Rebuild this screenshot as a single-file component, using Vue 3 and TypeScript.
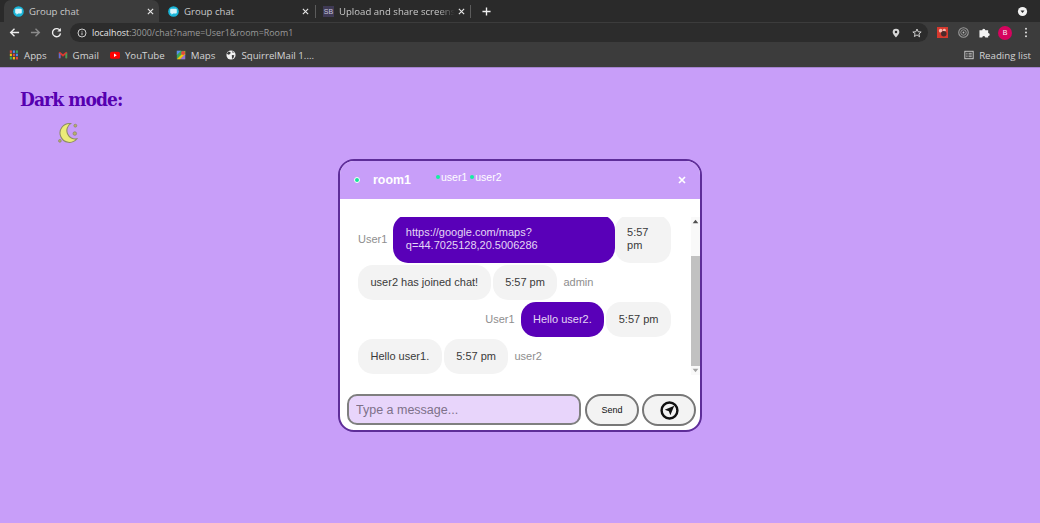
<template>
  <div class="browser">
    <!-- Tab strip -->
    <div class="tab-strip">
      <div
        v-for="tab in tabs"
        :key="tab.id"
        class="tab"
        :class="{ active: tab.active, divided: tab.divided }"
      >
        <span v-if="tab.sb" class="sb-icon">SB</span>
        <svg v-else class="fav" viewBox="0 0 12 12">
          <circle cx="6" cy="6" r="5.8" fill="#19b5d8" />
          <path d="M3.4 3h5.2a1 1 0 0 1 1 1v3.200a1 1 0 0 1-1 1H5.600L3.800 9.600V8.200h-.4a1 1 0 0 1-1-1V4a1 1 0 0 1 1-1z" fill="#d8f4fb" />
        </svg>
        <span class="tab-title" :class="{ fade: tab.sb }">{{ tab.title }}</span>
        <svg class="tab-close" viewBox="0 0 8 8">
          <path d="M1 1l6 6M7 1L1 7" stroke="#e8e8e8" stroke-width="1.3" />
        </svg>
      </div>
      <svg class="new-tab" viewBox="0 0 10 10">
        <path d="M5 .5v9M.5 5h9" stroke="#f0f0f0" stroke-width="1.5" />
      </svg>
      <svg class="tab-search" viewBox="0 0 12 12">
        <circle cx="6" cy="6" r="5" fill="#f2f2f2" />
        <path d="M3.8 5h4.4L6 7.600z" fill="#2a2a2a" />
      </svg>
    </div>

    <!-- Toolbar -->
    <div class="toolbar">
      <svg class="tool-icon" viewBox="0 0 12 12">
        <path d="M11 6H2M6 1.800L1.800 6 6 10.200" fill="none" stroke="#eee" stroke-width="1.5" />
      </svg>
      <svg class="tool-icon" viewBox="0 0 12 12">
        <path d="M1 6h9M6 1.800L10.200 6 6 10.200" fill="none" stroke="#8b8b8b" stroke-width="1.5" />
      </svg>
      <svg class="tool-icon" viewBox="0 0 12 12">
        <path d="M10 4.200A4.400 4.400 0 1 0 10.400 7" fill="none" stroke="#eee" stroke-width="1.5" />
        <path d="M10.800 1v4h-4z" fill="#eee" />
      </svg>
      <div class="omnibox">
        <svg class="info" viewBox="0 0 12 12">
          <circle cx="6" cy="6" r="4.800" fill="none" stroke="#ddd" stroke-width="1.1" />
          <path d="M6 5.400v3.200M6 3.400v1" stroke="#ddd" stroke-width="1.1" />
        </svg>
        <span class="url"><b>localhost</b>:3000/chat?name=User1&amp;room=Room1</span>
        <svg class="omni-icon" viewBox="0 0 12 12">
          <path d="M6 .8a4 4 0 0 0-4 4c0 2.800 4 6.600 4 6.600s4-3.800 4-6.600a4 4 0 0 0-4-4z" fill="#d6d6d6" />
          <circle cx="6" cy="4.800" r="1.500" fill="#2c2c2c" />
        </svg>
        <svg class="omni-icon" viewBox="0 0 12 12">
          <path d="M6 1.200l1.400 3.300 3.600.3-2.700 2.300.8 3.500L6 8.300l-3.100 1.900.8-3.500L1 4.800l3.600-.3z" fill="none" stroke="#dcdcdc" stroke-width="1.1" />
        </svg>
      </div>
      <div class="extensions">
        <svg class="ext" viewBox="0 0 12 12">
          <rect width="12" height="12" fill="#d6392e" />
          <circle cx="4" cy="4" r="2" fill="#f3b9b0" />
          <circle cx="8" cy="3.600" r="1.600" fill="#f3b9b0" />
          <circle cx="7.400" cy="7.400" r="3" fill="#4a2b2b" />
        </svg>
        <svg class="ext" viewBox="0 0 12 12">
          <circle cx="6" cy="6" r="5.200" fill="none" stroke="#9a9a9a" stroke-width="1.2" />
          <circle cx="6" cy="6" r="3" fill="none" stroke="#9a9a9a" stroke-width="1" />
          <circle cx="6" cy="6" r="1" fill="#bbb" />
        </svg>
        <svg class="ext" viewBox="0 0 12 12">
          <path d="M.5 3.500h3a1.700 1.700 0 1 1 3.400 0H10v3a1.700 1.700 0 1 1 0 3.400V11.500H6.900a1.700 1.700 0 1 0-3.400 0H.5z" fill="#f4f4f4" />
        </svg>
        <span class="avatar">B</span>
        <svg class="dots" viewBox="0 0 4 12">
          <circle cx="2" cy="2" r="1.1" fill="#ddd" />
          <circle cx="2" cy="6" r="1.1" fill="#ddd" />
          <circle cx="2" cy="10" r="1.1" fill="#ddd" />
        </svg>
      </div>
    </div>

    <!-- Bookmarks -->
    <div class="bookmarks">
      <div class="bookmark">
        <svg class="mark" viewBox="0 0 12 12">
          <g v-for="(col, c) in appColors" :key="c">
            <rect v-for="r in 3" :key="r" :x="1 + c * 3.6" :y="0.5 + (r - 1) * 3.9" width="2.5" height="3" :fill="col[r - 1]" />
          </g>
        </svg>
        Apps
      </div>
      <div class="bookmark">
        <svg class="mark" viewBox="0 0 12 12">
          <path d="M1 3v7h2V5.500L6 8l3-2.500V10h2V3L9.800 2 6 5 2.200 2z" fill="#d93a2f" />
          <path d="M1 3v7h2V5.500z" fill="#5b6fd6" />
          <path d="M11 3v7H9V5.500z" fill="#3aa55b" />
        </svg>
        Gmail
      </div>
      <div class="bookmark">
        <svg class="mark" viewBox="0 0 12 12">
          <rect y="2" width="12" height="8.500" rx="2.200" fill="#f00" />
          <path d="M4.800 4.300v4l3.400-2z" fill="#fff" />
        </svg>
        YouTube
      </div>
      <div class="bookmark">
        <svg class="mark" viewBox="0 0 12 12">
          <rect x="1" y="1" width="10" height="10" fill="#3aa55b" />
          <path d="M1 11l10-10v4L5 11z" fill="#f4c20d" />
          <path d="M1 1h5L1 6z" fill="#5b8def" />
          <circle cx="8.500" cy="3.500" r="2.400" fill="#e2483d" />
          <path d="M5 11l6-6v6z" fill="#9a6fd0" />
        </svg>
        Maps
      </div>
      <div class="bookmark">
        <svg class="mark" viewBox="0 0 12 12">
          <circle cx="6" cy="6" r="5.500" fill="#f2f2f2" />
          <path d="M3 1.800l2.600 1-.6 2-2 .8-2-1zM7 6l3 .4-1.200 3.400-1.600.8zM7.500 1l2 2-1.500.6z" fill="#3c3c3c" />
        </svg>
        SquirrelMail 1....
      </div>
      <div class="reading">
        <svg class="mark" viewBox="0 0 12 12">
          <rect x="1" y="1.500" width="10" height="9" fill="none" stroke="#ddd" stroke-width="1" />
          <path d="M2.800 4h1.400M2.800 6h1.400M2.800 8h1.400M5.500 4h3.800M5.500 6h3.800M5.500 8h3.800" stroke="#ddd" stroke-width=".9" />
        </svg>
        Reading list
      </div>
    </div>

    <!-- Page -->
    <main class="page">
      <div class="dark-toggle">
        <h2 class="dark-title">Dark mode:</h2>
        <svg class="moon" viewBox="0 0 20 20">
          <path d="M12 1.500A9 9 0 1 0 18 16 8 8 0 0 1 12 1.500z" fill="#ecec78" stroke="#8d8d63" stroke-width="1" />
          <circle cx="16.500" cy="3.500" r="1.400" fill="#b7b06e" stroke="#85805c" stroke-width=".6" />
          <circle cx="16" cy="11" r="1.700" fill="#b7b06e" stroke="#85805c" stroke-width=".6" />
          <circle cx="1.800" cy="18" r="1.300" fill="#b7b06e" stroke="#85805c" stroke-width=".6" />
        </svg>
      </div>

      <section class="chat">
        <header class="chat-head">
          <span class="status-dot"></span>
          <span class="room">room1</span>
          <div class="online">
            <span v-for="user in onlineUsers" :key="user" class="online-user">{{ user }}</span>
          </div>
          <svg class="close" viewBox="0 0 8 8">
            <path d="M1 1l6 6M7 1L1 7" stroke="#fff" stroke-width="1.700" />
          </svg>
        </header>

        <div class="chat-body">
          <div class="messages">
            <div
              v-for="msg in messages"
              :key="msg.id"
              class="row"
              :class="{ mine: msg.mine, long: msg.long }"
            >
              <span v-if="msg.mine" class="sender">{{ msg.sender }}</span>
              <span class="bubble">{{ msg.text }}</span>
              <span class="time">{{ msg.time }}</span>
              <span v-if="!msg.mine" class="sender">{{ msg.sender }}</span>
            </div>
          </div>
          <div class="scrollbar">
            <svg class="arrow" viewBox="0 0 8 6"><path d="M4 1.500L6.500 4.500h-5z" fill="#505050" /></svg>
            <div class="track"><div class="thumb"></div></div>
            <svg class="arrow" viewBox="0 0 8 6"><path d="M4 4.500L1.500 1.500h5z" fill="#a3a3a3" /></svg>
          </div>
        </div>

        <form class="composer" @submit.prevent>
          <input class="msg-input" type="text" placeholder="Type a message..." />
          <button class="btn send" type="submit">Send</button>
          <button class="btn locate" type="button" aria-label="Send location">
            <svg viewBox="0 0 18 18">
              <circle cx="9" cy="9" r="7.500" fill="none" stroke="#111" stroke-width="2.300" />
              <path d="M13.500 4.500L9.800 13.500 8.400 9.600 4.500 8.200z" fill="#111" />
            </svg>
          </button>
        </form>
      </section>
    </main>
  </div>
</template>

<script setup lang="ts">
const tabs = [
  { id: 1, title: 'Group chat', active: true },
  { id: 2, title: 'Group chat', divided: true },
  { id: 3, title: 'Upload and share screens', sb: true, divided: true }
];

const appColors = [
  ['#e2483d', '#f4c20d', '#3aa55b'],
  ['#4a8af0', '#e2483d', '#f4c20d'],
  ['#3aa55b', '#4a8af0', '#e2483d']
];

const onlineUsers = ['user1', 'user2'];

const messages = [
  { id: 1, sender: 'User1', text: 'https://google.com/maps?q=44.7025128,20.5006286', time: '5:57 pm', mine: true, long: true },
  { id: 2, sender: 'admin', text: 'user2 has joined chat!', time: '5:57 pm' },
  { id: 3, sender: 'User1', text: 'Hello user2.', time: '5:57 pm', mine: true },
  { id: 4, sender: 'user2', text: 'Hello user1.', time: '5:57 pm' }
];
</script>

<style scoped>
.browser {
  width: 1040px;
  height: 523px;
  display: flex;
  flex-direction: column;
  overflow: hidden;
  font-family: "Liberation Sans", Arial, sans-serif;
}

.tab-strip {
  height: 22px;
  flex: none;
  display: flex;
  align-items: stretch;
  padding-left: 4px;
  background: #2a2a2a;
}

.tab {
  width: 155px;
  box-sizing: border-box;
  display: flex;
  align-items: center;
  padding: 0 5px 0 9px;
  color: #c9c9c9;
  font: 9.6px "Open Sans", sans-serif;
  position: relative;
}

.tab.active {
  background: #3c3c3c;
  border-radius: 7px 7px 0 0;
}

.tab.divided::after {
  content: "";
  position: absolute;
  right: -2px;
  top: 5px;
  height: 13px;
  width: 1px;
  background: #5c5c5c;
}

.fav {
  width: 11px;
  height: 11px;
  flex: none;
  margin-right: 5px;
}

.sb-icon {
  width: 11px;
  height: 11px;
  flex: none;
  margin-right: 5px;
  background: #3f3a55;
  color: #c9c4dc;
  font: 7px/11px "Liberation Sans", sans-serif;
  text-align: center;
}

.tab-title {
  flex: 1;
  white-space: nowrap;
}

.tab-title.fade {
  -webkit-mask-image: linear-gradient(to right, #000 85%, transparent);
  mask-image: linear-gradient(to right, #000 85%, transparent);
}

.tab-close {
  width: 7px;
  height: 7px;
  flex: none;
  margin-left: 3px;
}

.new-tab {
  width: 9px;
  height: 9px;
  align-self: center;
  margin-left: 13px;
}

.tab-search {
  width: 11px;
  height: 11px;
  align-self: center;
  margin-left: auto;
  margin-right: 12px;
}

.toolbar {
  height: 21px;
  flex: none;
  display: flex;
  align-items: center;
  background: #3c3c3c;
  padding-left: 9px;
}

.tool-icon {
  width: 11px;
  height: 11px;
  flex: none;
  margin-right: 10px;
}

.omnibox {
  flex: 1;
  height: 19px;
  margin-left: -2px;
  display: flex;
  align-items: center;
  padding: 0 6px 0 7px;
  background: #2c2c2c;
  border-radius: 10px;
}

.info {
  width: 10px;
  height: 10px;
  margin-right: 5px;
}

.url {
  color: #9a9a9a;
  font: 8.9px "Open Sans", sans-serif;
  flex: 1;
}

.url b {
  color: #e6e6e6;
  font-weight: 400;
}

.omni-icon {
  width: 10px;
  height: 10px;
  margin-left: 11px;
}

.extensions {
  width: 112px;
  flex: none;
  display: flex;
  align-items: center;
  padding-left: 9px;
  box-sizing: border-box;
}

.ext {
  width: 11px;
  height: 11px;
  margin-right: 10px;
}

.avatar {
  width: 14px;
  height: 14px;
  margin-left: -2px;
  border-radius: 50%;
  background: #d6045e;
  color: #f5f5f5;
  font: 7px/14px "Liberation Sans", sans-serif;
  text-align: center;
}

.dots {
  width: 4px;
  height: 11px;
  margin-left: 12px;
}

.bookmarks {
  height: 24px;
  flex: none;
  display: flex;
  align-items: center;
  padding-left: 9px;
  background: #3c3c3c;
  color: #d4d4d4;
  font: 9.7px "Open Sans", sans-serif;
}

.bookmark {
  display: flex;
  align-items: center;
  margin-right: 11px;
  white-space: nowrap;
}

.mark {
  width: 10px;
  height: 10px;
  margin-right: 5px;
  flex: none;
}

.reading {
  display: flex;
  align-items: center;
  margin-left: auto;
  margin-right: 9px;
  padding-left: 7px;
}

.page {
  flex: 1;
  background: #c89ef9;
  border-top: 1px solid #a583cf;
  box-sizing: border-box;
}

.dark-toggle {
  height: 91px;
  box-sizing: border-box;
  padding: 17px 0 0 20px;
}

.dark-title {
  margin: 0;
  color: #5600b0;
  font: 700 19px/28px "DejaVu Serif", serif;
  font-stretch: condensed;
  letter-spacing: -0.9px;
}

.moon {
  display: block;
  width: 21px;
  height: 21px;
  margin: 9px 0 0 38px;
}

.chat {
  width: 364px;
  height: 273px;
  margin: 0 auto;
  box-sizing: border-box;
  border: 2px solid #5e2d99;
  border-radius: 16px;
  background: #fff;
  overflow: hidden;
}

.chat-head {
  height: 38px;
  display: flex;
  align-items: center;
  background: #c89ef9;
  color: #fff;
  padding-left: 14px;
}

.status-dot {
  width: 4px;
  height: 4px;
  border: 1.5px solid #fff;
  background: #14e39a;
  border-radius: 50%;
  flex: none;
}

.room {
  font-weight: 700;
  font-size: 12.4px;
  margin-left: 13px;
  width: 63px;
  flex: none;
}

.online {
  display: flex;
  align-self: flex-start;
  margin-top: 10px;
  font-size: 10.5px;
}

.online-user {
  display: flex;
  align-items: center;
}

.online-user::before {
  content: "";
  width: 4px;
  height: 4px;
  border-radius: 50%;
  background: #14f0a0;
  margin-right: 1px;
}

.online-user + .online-user {
  margin-left: 3px;
}

.close {
  width: 8px;
  height: 8px;
  margin-left: auto;
  margin-right: 14px;
}

.chat-body {
  height: 158px;
  margin-top: 18px;
  display: flex;
}

.messages {
  width: 351px;
  flex: none;
  box-sizing: border-box;
  padding: 0 20px 1px 18px;
  display: flex;
  flex-direction: column;
  justify-content: flex-end;
  gap: 2px;
  overflow: hidden;
  font-size: 11px;
  line-height: 13px;
}

.row {
  display: flex;
  align-items: center;
  flex: none;
}

.row.mine {
  justify-content: flex-end;
}

.bubble,
.time {
  padding: 11px 12.5px;
  border-radius: 15px;
  background: #f3f3f3;
  color: #3a3a3a;
  box-sizing: border-box;
}

.time {
  margin-left: 2px;
  white-space: nowrap;
}

.mine .bubble {
  background: #5900b8;
  color: #e4d6f5;
}

.mine .sender {
  margin: 0 6px 0 0;
}

.sender {
  margin-left: 6px;
  font-size: 11px;
  color: #8e8e8e;
}

.long .sender {
  margin-right: 6px;
}

.long .bubble {
  width: 222px;
}

.long .time {
  width: 56px;
  margin-left: 0;
  padding: 11px 12px;
  white-space: normal;
}

.scrollbar {
  width: 9px;
  flex: none;
  display: flex;
  flex-direction: column;
  background: #f9f9f9;
}

.arrow {
  width: 9px;
  height: 9px;
  flex: none;
}

.track {
  flex: 1;
  padding-top: 30px;
  box-sizing: border-box;
}

.thumb {
  height: 100%;
  background: #c1c1c1;
}

.composer {
  display: flex;
  align-items: flex-start;
  margin: 19px 0 0 7px;
}

.msg-input {
  width: 234px;
  height: 31px;
  box-sizing: border-box;
  border: 2px solid #7f7f7f;
  border-radius: 10px;
  background: #e8d5fb;
  padding: 0 7px;
  font: 12.5px "Liberation Sans", sans-serif;
  outline: none;
}

.msg-input::placeholder {
  color: #7d7189;
}

.btn {
  height: 32px;
  box-sizing: border-box;
  border: 2px solid #777;
  border-radius: 16px;
  background: #f3f3f3;
  color: #111;
  padding: 0;
  font: 9px "Liberation Sans", sans-serif;
  display: flex;
  align-items: center;
  justify-content: center;
}

.send {
  width: 54px;
  margin-left: 4px;
}

.locate {
  width: 54px;
  margin-left: 3px;
}

.locate svg {
  width: 19px;
  height: 19px;
}
</style>

<style>
html,
body {
  margin: 0;
  background: #c89ef9;
}
</style>
